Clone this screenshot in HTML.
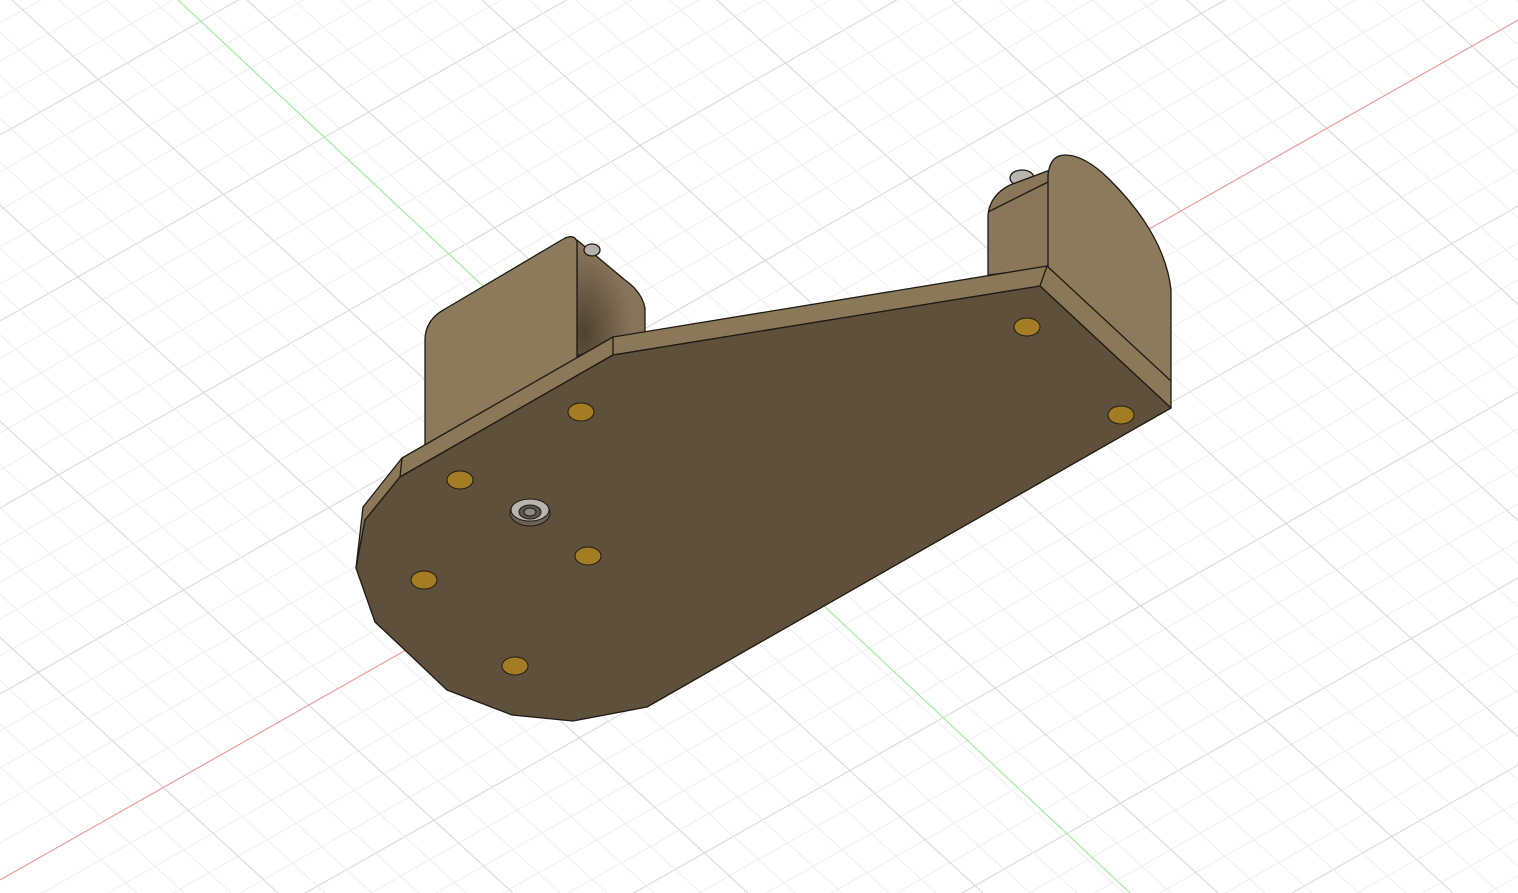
<!DOCTYPE html>
<html><head><meta charset="utf-8"><style>
html,body{margin:0;padding:0;background:#fff;overflow:hidden;width:1518px;height:893px}
svg{display:block}
</style></head><body>
<svg width="1518" height="893" viewBox="0 0 1518 893" xmlns="http://www.w3.org/2000/svg">
<defs>
<radialGradient id="sh" cx="0.1" cy="0.8" r="0.7">
<stop offset="0" stop-color="#4e4231"/><stop offset="1" stop-color="#87735a"/></radialGradient>
</defs>
<g stroke-width="1" fill="none">
<g stroke="#eeeeee">
<path d="M0,-88 L1518,-948 M0,-51 L1518,-911 M0,-14 L1518,-874 M0,23 L1518,-837 M0,61 L1518,-799 M0,98 L1518,-762 M0,172 L1518,-688 M0,210 L1518,-650 M0,247 L1518,-613 M0,284 L1518,-576 M0,358 L1518,-502 M0,396 L1518,-464 M0,433 L1518,-427 M0,470 L1518,-390 M0,545 L1518,-315 M0,582 L1518,-278 M0,619 L1518,-241 M0,656 L1518,-204 M0,731 L1518,-129 M0,768 L1518,-92 M0,805 L1518,-55 M0,843 L1518,-17 M0,917 L1518,57 M0,954 L1518,94 M0,991 L1518,131 M0,1029 L1518,169 M0,1103 L1518,243 M0,1140 L1518,280 M0,1178 L1518,318 M0,1215 L1518,355 M0,1289 L1518,429 M0,1327 L1518,467 M0,1364 L1518,504 M0,1401 L1518,541 M0,1476 L1518,616 M0,1513 L1518,653 M0,1550 L1518,690 M0,1587 L1518,727 M0,1662 L1518,802 M0,1699 L1518,839 M0,1736 L1518,876 M0,1773 L1518,913"/>
</g>
<g stroke="#d6d6d6">
<path d="M0,135 L1518,-725 M0,321 L1518,-539 M0,508 L1518,-352 M0,694 L1518,-166 M0,1066 L1518,206 M0,1252 L1518,392 M0,1438 L1518,578 M0,1625 L1518,765"/>
</g>
<g stroke="#eeeeee">
<path d="M-411,0 L560,893 M-364,0 L607,893 M-317,0 L654,893 M-270,0 L701,893 M-176,0 L795,893 M-129,0 L842,893 M-82,0 L889,893 M-35,0 L936,893 M59,0 L1030,893 M106,0 L1077,893 M153,0 L1124,893 M200,0 L1171,893 M294,0 L1265,893 M341,0 L1312,893 M388,0 L1359,893 M435,0 L1406,893 M529,0 L1500,893 M576,0 L1547,893 M623,0 L1594,893 M670,0 L1641,893 M764,0 L1735,893 M811,0 L1782,893 M858,0 L1829,893 M905,0 L1876,893 M999,0 L1970,893 M1046,0 L2017,893 M1093,0 L2064,893 M1140,0 L2111,893 M1234,0 L2205,893 M1281,0 L2252,893 M1328,0 L2299,893 M1375,0 L2346,893 M1469,0 L2440,893 M1516,0 L2487,893 M-505,0 L466,893 M-552,0 L419,893 M-599,0 L372,893 M-646,0 L325,893 M-740,0 L231,893 M-787,0 L184,893 M-834,0 L137,893"/>
</g>
<g stroke="#d6d6d6">
<path d="M-223,0 L748,893 M12,0 L983,893 M247,0 L1218,893 M482,0 L1453,893 M717,0 L1688,893 M952,0 L1923,893 M1187,0 L2158,893 M1422,0 L2393,893 M-458,0 L513,893 M-693,0 L278,893"/>
</g>
<path d="M0,880 L1518,20" stroke="#f28a8a"/>
<path d="M178,0 L1130,893" stroke="#8fec8f"/>
</g>

<g stroke="#1e1a14" stroke-width="1.3" stroke-linejoin="round">
<path d="M577,240 L625,280 Q642,292 645,308 L645,334 L577,356 Z" fill="url(#sh)"/>
<ellipse cx="592" cy="250" rx="8" ry="6" fill="#b5b0a8"/>
<path d="M425,452 L425,340 Q425,320 445,309 L565,238 Q575,234 577,242 L577,366 Z" fill="#8d7a5b"/>
<ellipse cx="1022" cy="178" rx="12" ry="8" fill="#b9b5ae"/>
<path d="M988,275 L988,215 Q990,195 1010,185 L1050,170 L1048,268 Z" fill="#8a7658"/>
<path d="M988,212 L1048,182" fill="none"/>
<path d="M1048,268 L1048,175 Q1050,155 1065,155 Q1085,155 1110,180 Q1165,235 1171,290 L1171,382 Z" fill="#8c7a5c"/>
<path d="M356,568 L363,507 L402,458 L613,337 L1047,266 L1171,381 L1171,408 L1040,286 L613,355 L400,477 L365,520 Z" fill="#8b7858"/>
<path d="M400,477 L402,458 M613,355 L613,337 M1040,286 L1047,266" fill="none"/>
<path d="M400,477 L613,355 L1040,286 L1171,408 L647,707 L573,721 L512,715 L447,690 L407,652 L375,622 L356,568 L365,520 Z" fill="#5f503b"/>
</g>
<g fill="#a47c24" stroke="#1e1a14" stroke-width="1">
<ellipse cx="581" cy="412" rx="13" ry="9"/>
<ellipse cx="460" cy="480" rx="13" ry="9"/>
<ellipse cx="588" cy="556" rx="13" ry="9"/>
<ellipse cx="424" cy="580" rx="13" ry="9"/>
<ellipse cx="515" cy="666" rx="13" ry="9"/>
<ellipse cx="1027" cy="327" rx="13" ry="9"/>
<ellipse cx="1121" cy="415" rx="13" ry="9"/>
</g>
<g stroke="#1e1a14" stroke-width="1">
<ellipse cx="530" cy="513" rx="20" ry="13" fill="#6a6258"/>
<ellipse cx="530" cy="510" rx="19" ry="11" fill="#b8b4ae"/>
<ellipse cx="530" cy="512" rx="11" ry="7" fill="#5b5650"/>
<ellipse cx="530" cy="512" rx="6" ry="4" fill="#8f8a84"/>
</g>
</svg>
</body></html>
